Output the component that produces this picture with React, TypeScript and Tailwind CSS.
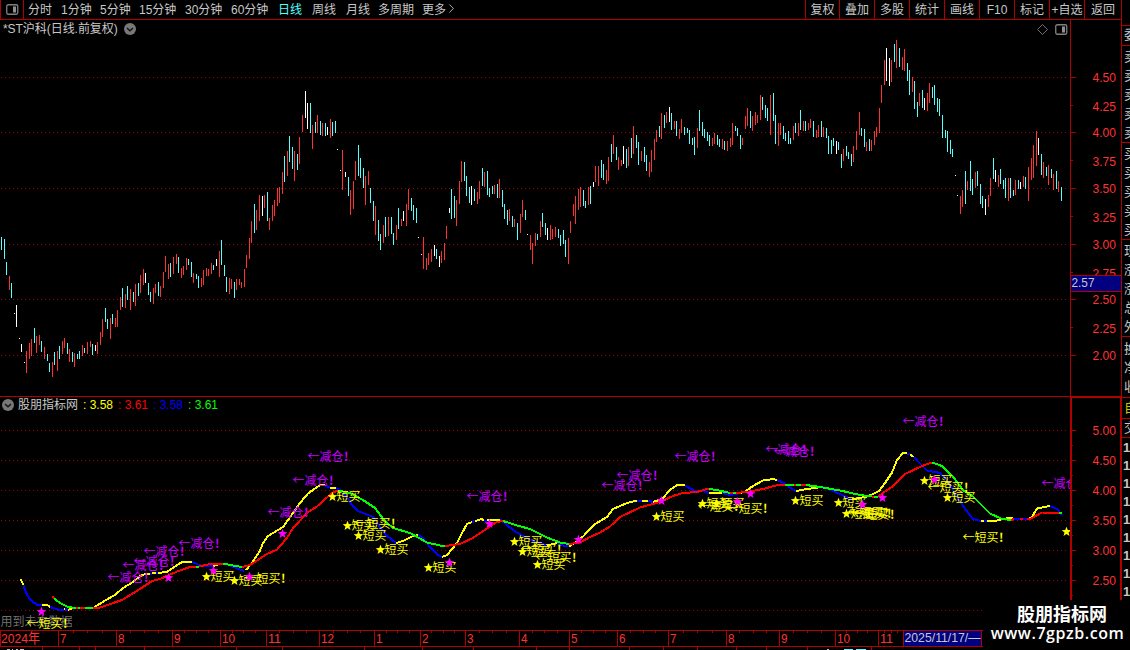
import { ChevronRight } from 'lucide-react'

const RED = '#ff3232'
const LINE = '#b00000'
const CYAN = '#54ffff'

const PERIODS = [
  { label: '分时', width: 'w-[33px]' },
  { label: '1分钟', width: 'w-[39px]' },
  { label: '5分钟', width: 'w-[39px]' },
  { label: '15分钟', width: 'w-[46px]' },
  { label: '30分钟', width: 'w-[46px]' },
  { label: '60分钟', width: 'w-[47px]' },
  { label: '日线', width: 'w-[34px]', active: true },
  { label: '周线', width: 'w-[34px]' },
  { label: '月线', width: 'w-[32px]' },
  { label: '多周期', width: 'w-[44px]' },
]

const TOOLS = ['复权', '叠加', '多股', '统计', '画线', 'F10', '标记', '+自选']

// color + x, high, low
const BARS = `
c1,237,250 c4,239,259 c6,262,275 r9,276,290 c11,283,298 w14,313,314 w16,305,327 w19,338,339 w21,344,352 w24,362,363
r26,351,373 r29,343,359 r31,339,356 c34,328,343 r36,336,353 r39,335,345 c41,341,352 r44,347,359 c47,354,361 c49,363,372
r52,362,377 c54,352,365 r57,351,371 c59,346,359 r62,341,354 r64,338,348 c67,343,354 r69,349,362 c72,352,362 r74,353,367
c77,354,359 c79,351,359 r82,345,356 c84,348,353 r87,342,354 r90,341,347 c92,344,355 w95,345,351 r97,342,354 r100,332,345
r102,319,337 c105,308,322 c107,319,329 r110,318,339 c112,314,324 r115,318,327 r117,310,327 r120,297,310 c122,288,307 r125,294,308
c127,286,300 r130,289,310 c133,292,302 r135,284,306 c138,283,296 r140,275,293 r143,269,285 w145,273,283 c148,283,295 c150,292,302
r153,288,304 r155,284,293 c158,282,296 r160,286,297 r163,272,288 r165,256,272 r168,264,279 c170,263,277 r173,257,274 r176,254,264
c178,257,273 r181,268,278 r183,266,275 r186,258,270 c188,259,265 c191,262,277 r193,273,283 c196,274,279 c198,276,288 r201,278,287
r203,270,285 r206,268,276 r208,269,276 r211,263,274 c213,265,270 w216,259,266 r219,251,277 c221,240,265 c224,265,276 c226,277,292
r229,278,294 r231,279,289 c234,282,298 r236,279,290 r239,279,285 r241,282,288 r244,269,287 r246,255,268 r249,238,259 r251,221,243
c254,204,233 r256,210,230 r259,195,221 w262,196,216 r264,195,208 c267,192,221 r269,218,230 r272,205,221 r274,200,216 r277,188,206
r279,187,203 r282,172,194 c284,156,182 r287,151,176 c289,136,162 c292,147,169 r294,151,181 c297,154,170 r299,137,164 r302,115,132
w305,91,118 w307,103,129 c310,103,133 r312,125,149 c315,122,133 r317,115,133 c320,121,135 r322,123,136 c325,123,136 w327,127,135
r330,119,138 c332,122,136 c335,121,133 w337,149,150 w340,170,171 r342,150,190 w345,172,177 c348,177,196 r350,190,215 r353,181,209
r355,161,180 c358,145,176 c360,158,178 c363,168,188 r365,176,205 r368,171,185 c370,188,203 c373,201,221 r375,206,235 c378,220,241
c380,234,250 r383,225,243 c385,217,237 r388,217,236 c391,217,234 c393,233,245 r396,225,240 c398,208,229 r401,219,226 w403,211,221
r406,204,226 r408,189,210 c411,198,211 c413,205,220 c416,208,223 w418,237,238 w421,254,255 r423,237,269 r426,258,270 r428,253,265
r431,249,262 w434,245,256 c436,249,259 w439,256,267 r441,251,263 r444,243,260 r446,226,239 w449,208,213 c451,189,219 c454,196,218
r456,200,226 r459,181,204 r461,161,182 c464,162,181 c466,176,196 c469,187,203 w471,186,205 c474,189,201 r477,192,204 r479,181,199
c482,168,186 r484,172,187 c487,171,195 c489,188,197 c492,186,194 r494,185,194 c497,184,198 r499,179,198 c502,190,207 c504,204,219
c507,210,225 r509,209,221 c512,216,227 r514,219,227 c517,223,240 r520,214,233 r522,200,217 c525,210,220 w527,234,235 r530,235,250
r532,243,264 r535,233,246 c537,234,240 r540,221,237 c542,213,227 c545,223,235 w547,228,240 r550,225,240 r552,229,239 r555,227,237
c558,229,238 c560,235,246 c563,230,244 c565,240,257 r568,238,264 r570,221,233 r573,204,216 r575,196,224 r578,189,210 r580,187,207
c583,190,206 c585,201,208 r588,187,205 c590,186,204 w593,182,187 r595,166,182 r598,166,186 c601,160,178 c603,164,180 r606,170,184
r608,157,181 c611,144,162 r613,135,154 c616,147,160 r618,157,170 r621,160,166 w623,146,164 c626,149,168 r628,147,166 c631,138,158
r633,126,154 c636,135,148 c638,142,165 r641,151,161 c644,147,162 c646,155,171 r649,162,177 r651,150,172 r654,139,160 r656,130,142
c659,126,137 r661,113,139 c664,115,128 r666,112,123 w669,107,122 c671,113,130 r674,121,129 c676,121,136 r679,129,139 r681,119,133
c684,127,135 c687,128,133 c689,130,144 c692,138,145 c694,137,155 r697,128,148 c699,110,131 c702,122,136 c704,129,138 c707,132,141
c709,135,146 r712,138,146 r714,133,144 c717,135,145 c719,139,147 r722,139,149 c724,141,150 r727,141,151 r730,138,147 r732,123,145
c735,126,131 c737,128,136 c740,135,149 r742,138,145 r745,116,129 r747,108,126 c750,111,128 r752,116,131 r755,112,125 r757,115,123
r760,95,120 c762,97,110 c765,105,118 c767,108,121 r770,95,135 c773,93,121 c775,115,144 r778,123,146 r780,123,135 c783,126,139
c785,133,141 c788,131,144 c790,138,144 r793,126,140 c795,123,133 r798,123,136 c800,110,130 r803,121,131 c805,121,131 r808,123,130
r810,119,128 c813,121,137 r816,130,138 r818,125,137 c821,121,137 r823,127,137 c826,128,138 c828,136,154 c831,140,154 c833,138,146
w836,141,154 c838,142,150 c841,154,168 r843,149,161 c846,146,156 c848,152,159 c851,154,166 r853,146,162 r856,131,150 r859,112,135
c861,128,136 c864,129,147 r866,142,151 c869,139,151 r871,140,151 r874,131,145 r876,127,137 r879,108,133 r881,85,103 r884,60,85
w886,48,81 w889,58,86 r891,60,82 c894,44,62 r896,40,68 c899,48,67 r902,57,70 r904,49,71 c907,63,81 c909,70,95
r912,77,92 c914,81,109 c917,102,117 r919,93,106 c922,90,108 w924,98,110 r927,93,111 r929,83,103 c932,87,98 c934,85,105
c937,98,112 c939,99,116 c942,115,138 c945,130,138 c947,131,152 c950,140,154 c952,149,157 w955,175,176 w957,195,196 r960,196,214
r962,190,207 c965,171,204 r967,181,190 c970,161,191 c972,179,195 r975,172,188 c977,171,186 c980,184,204 c982,196,208 w985,199,215
r988,195,207 r990,178,196 c993,158,179 w995,170,182 r998,175,187 c1000,169,184 c1003,180,189 c1005,178,198 r1008,178,201 c1010,178,198
c1013,190,196 r1015,180,195 c1018,180,189 w1020,182,189 r1023,176,187 c1025,177,189 r1028,167,201 r1031,158,180 r1033,145,178 r1036,131,166
w1038,138,155 c1041,154,175 r1043,162,178 c1046,167,176 r1048,165,185 c1051,169,178 r1053,174,190 c1056,171,189 r1058,181,192 c1061,187,201`
  .trim()
  .split(/\s+/)
  .map((s) => {
    const [x, high, low] = s.slice(1).split(',').map(Number)
    return { kind: s[0], x, high, low }
  })

const BAR_COLORS: Record<string, string> = { c: CYAN, r: RED, w: '#ffffff' }

// y = rising, b = falling
const FAST = [
  'y 20.5,579 23.5,585',
  'b 23.5,585 25,590 28,596.5 32.5,601.5 36.5,604.5 42,605',
  'y 42,605 48,605.5 50,607',
  'b 50,607 58,609.5 64,610',
  'y 64,610 65,609',
  'b 65,609 68,610',
  'y 68,610 73,608 93,608 98,605 105,600.5 115,595 123,588 133,582 140,576 147,573.5 150,573.5',
  'b 150,573.5 152,573.5',
  'y 152,573.5 156,573',
  'b 156,573 158,573',
  'y 158,573 167,572 177,565 183,561.5 192,562',
  'b 192,562 197,564 202,566 213,566',
  'y 213,566 220,564 226,564',
  'b 226,564 236,568 244,571',
  'y 246,570 253,561.5 260,550.5 263,543 268,536 273,533 283,527 293,513 300,503 308,493.5 320,485 325,485.5',
  'b 325,485.5 330,487.5',
  'y 330,487.5 336,488',
  'b 336,488 341.5,491 347,497 352,505 358,511 373,517 380,527 387,536 396,543',
  'y 396,543 403,541 412,536.5 418,535',
  'b 418,535 423,538 430,547 438,555 442,557',
  'y 442,557 447,555 457,543 461,535 467,524 472,522',
  'b 472,522 475,521',
  'y 475,521 482,519 484,520.5',
  'b 484,520.5 487,520.5',
  'y 487,520.5 500,519.5',
  'b 500,519.5 504,522.5 513,530 523,536 533,541 547,545.5',
  'y 547,545.5 557,543',
  'b 557,543 563,545.5 569,546.5',
  'y 569,546.5 573,544 578,541 583,536.5 595,524 607,517 613,509 627,503 637,500.5',
  'b 637,500.5 642,500.5',
  'y 642,500.5 648,500.5',
  'b 648,500.5 653,502',
  'y 653,502 662,499 670,490 677,485 685,485.5',
  'b 685,485.5 695,491 703,491 709,493',
  'y 709,493 722,493',
  'b 722,493 730,495 740,493',
  'y 740,493 745,491.5 753,486 763,480.5 773,479 777,480',
  'b 777,480 783,482.5 792,489 796,491',
  'y 796,491 807,489 822,487',
  'b 822,487 827,488.5 840,494 852,499.5',
  'y 852,499.5 860,498 867,496.5 873,494 879,491 885,483 892,472.5 897,460 903,453 907,453.5',
  'b 907,453.5 910,454.5',
  'y 910,454.5 914,457',
  'b 914,457 918,461.5 927,470.5 940,473 947,480 953,490 960,501.5 967,511.5 973,519 981,521',
  'y 981,521 984,521',
  'b 984,521 987,521',
  'y 987,521 997,520.5 1010,517.5 1014,519',
  'b 1014,519 1022,519',
  'y 1022,519 1025,519',
  'b 1025,519 1028,519',
  'y 1028,519 1032,517 1037,508.5 1050,506',
  'b 1050,506 1057,509 1062,515',
]

// r = rising, g = falling
const SLOW = [
  'r 52.5,596 54,598.5',
  'g 54,598.5 60,603 68,607 76,608',
  'r 76,608 78,608',
  'g 78,608 80,608',
  'r 80,608 85,608',
  'g 85,608 93,608',
  'r 93,608 100,607.5 122,600 140,589 152,581 160,579 177,571.5 190,567 196,567',
  'g 196,567 199,566.5',
  'r 199,566.5 208,564.5 223,563.5',
  'g 223,563.5 233,565.5 242,567',
  'r 242,567 250,565 267,554 277,549.5 287,538 293,528 308,512 317,506.5 332,493 338,490.5',
  'g 338,490.5 350,493 363,500 375,508 385,521.5 393,528 410,533 427,542.5 440,545.5 445,546',
  'r 445,546 460,544 473,538 490,526.5 497,522 503,521',
  'g 503,521 517,525.5 530,529 547,537.5 560,542.5 569,544',
  'r 569,544 580,542.5 590,537 600,532.5 610,526.5 620,517 640,507.5 660,502 673,496 683,493 697,492 707,489 709,489',
  'g 709,489 717,490 730,493',
  'r 730,493 733,493',
  'g 733,493 736,493',
  'r 736,493 747,492 763,489 778,485 785,485',
  'g 785,485 794,485',
  'r 794,485 796,485',
  'g 796,485 801,485',
  'r 801,485 806,485',
  'g 806,485 820,487 840,490.5 860,495 872,496.5',
  'r 872,496.5 874,496.5',
  'g 874,496.5 878,496.5',
  'r 878,496.5 893,486 905,474 922,466 932,462.5',
  'g 932,462.5 942,466 953,476.5 963,490 973,496.5 990,513.5 1002,519 1011,520',
  'r 1011,520 1014,519',
  'b 1014,519 1020,519',
  'r 1020,519 1023,519',
  'b 1023,519 1027,519',
  'r 1027,519 1031,518.5 1042,512.5 1059,513',
  'g 1059,513 1062,513',
]

const LINE_COLORS: Record<string, string> = {
  y: '#ffff00',
  b: '#0000ff',
  r: '#ff0000',
  g: '#00ff00',
}

const BUY_STARS = [
  [206, 576], [234, 580], [332, 496], [347, 525], [358, 535], [380, 549], [428, 567], [514, 541], [522, 551],
  [537, 564], [656, 516], [702, 503], [716, 503], [795, 500], [838, 502], [846, 513], [924, 480], [947, 497], [1066, 531],
]

const CROSS_STARS = [
  [41, 611], [168, 577], [213, 570], [249, 576], [282, 533], [449, 562], [489, 523], [578, 539], [661, 500],
  [737, 501], [750, 493], [862, 504], [882, 497], [934, 479],
]

const BUY_NOTES = [
  [27, 624], [245, 579], [355, 524], [521, 550], [536, 558], [698, 507], [727, 509], [848, 513], [851, 514],
  [854, 515], [928, 488], [963, 538],
]

const SELL_NOTES = [
  [108, 578], [123, 566], [134, 562], [144, 552], [179, 544], [268, 513], [293, 481], [308, 457], [467, 497],
  [602, 486], [617, 476], [675, 457], [766, 450], [774, 452], [903, 422], [1042, 484],
]

const PRICES: [string, number][] = [
  ['4.50', 77], ['4.25', 106], ['4.00', 132], ['3.75', 161], ['3.50', 188], ['3.25', 217],
  ['3.00', 244], ['2.75', 273], ['2.50', 299], ['2.25', 328], ['2.00', 355],
]

const MONTHS: [string, number][] = [
  ['7', 58], ['8', 116], ['9', 172], ['10', 220], ['11', 266], ['12', 319], ['1', 374], ['2', 420], ['3', 465],
  ['4', 519], ['5', 569], ['6', 617], ['7', 668], ['8', 726], ['9', 779], ['10', 835], ['11', 878],
]

const QUOTE_GROUPS = [
  { rows: ['委'], cls: 'h-[20px] pb-px' },
  { rows: ['卖', '卖', '卖', '卖', '卖'], cls: 'h-[97px] pt-0.5' },
  { rows: ['买', '买', '买', '买', '买'], cls: 'h-[97px] pt-0.5' },
  { rows: ['现', '涨', '涨', '总', '外'], cls: 'h-[97px] pt-0.5' },
  { rows: ['换', '净', '收'], cls: 'h-[61px] pt-0.5' },
  { rows: ['自'], cls: 'h-[21px] text-[#c8c800]' },
  { rows: ['交'], cls: 'h-[19px]' },
]

const CJK = '"Liberation Sans", "Noto Sans CJK SC", sans-serif'

function Num({ x, y, w, children, fill = RED }: { x: number; y: number; w: number; children: string; fill?: string }) {
  return (
    <text x={x} y={y + 5} textLength={w} lengthAdjust="spacingAndGlyphs" fontSize="13.5" fontFamily={CJK} fill={fill}>
      {children}
    </text>
  )
}

function Star({ x, y, fill }: { x: number; y: number; fill: string }) {
  return (
    <path
      transform={`translate(${x + 0.5} ${y + 0.5})`}
      d="M0-4.8 1.3-1.4 4.8-1.3 2 .9 3 4.4 0 2.4-3 4.4-2 .9-4.8-1.3-1.3-1.4Z"
      fill={fill}
    />
  )
}

function Note({ x, y, fill, children }: { x: number; y: number; fill: string; children: string }) {
  const bang = children.endsWith('!')
  return (
    <text x={x - 0.5} y={y + 4} fontSize="12" fill={fill} fontFamily='"Noto Sans CJK SC", sans-serif'>
      {bang ? children.slice(0, -1) : children}
      {bang && (
        <tspan dx="0.5" fontWeight="bold">
          !
        </tspan>
      )}
    </text>
  )
}

function Grid({ rows }: { rows: number[] }) {
  return (
    <g stroke="#a80000" strokeDasharray="1 3" shapeRendering="crispEdges">
      {rows.map((y) => (
        <line key={y} x1="1" x2="1067" y1={y + 0.5} y2={y + 0.5} />
      ))}
    </g>
  )
}

function PanelIcon() {
  return (
    <svg width="13" height="11" viewBox="0 0 13 11" className="shrink-0">
      <rect x=".75" y=".75" width="11" height="9.5" rx="1.5" fill="none" stroke="#808080" strokeWidth="1.3" />
      <rect x="7" y="2.5" width="3" height="6" fill="#909090" />
    </svg>
  )
}

function Dropdown() {
  return (
    <svg width="12" height="12" viewBox="0 0 12 12" className="shrink-0">
      <circle cx="6" cy="6" r="6" fill="#787878" />
      <path d="M3 5l3 2.8L9 5" fill="none" stroke="#111" strokeWidth="1.4" />
    </svg>
  )
}

function Toolbar() {
  return (
    <header className="flex h-5 shrink-0 items-stretch border-b border-[#b00000] leading-[20px]">
      <div className="flex w-6 items-center justify-center border-x border-[#b00000] pb-px">
        <PanelIcon />
      </div>
      <nav className="flex flex-1 pl-1">
        {PERIODS.map(({ label, width, active }) => (
          <span key={label} className={`${width} shrink-0 ${active ? 'text-[#54ffff]' : ''}`}>
            {label}
          </span>
        ))}
        <span className="flex">
          更多
          <ChevronRight size={15} strokeWidth={1.4} className="-ml-0.5 mt-px" />
        </span>
      </nav>
      <div className="flex">
        {TOOLS.map((t, i) => (
          <span
            key={t}
            className={`border-l border-[#b00000] text-center whitespace-nowrap ${i === 0 ? 'w-[34px]' : 'w-[35px]'}`}
          >
            {t}
          </span>
        ))}
        <span className="w-[37px] border-l border-[#b00000] text-center">返回</span>
      </div>
    </header>
  )
}

function PriceChart() {
  return (
    <svg width="1121" height="376" viewBox="0 20 1121 376" className="block">
      <Grid rows={[77, 132, 188, 244, 299, 355]} />
      <g shapeRendering="crispEdges">
        {BARS.map((b) => (
          <rect key={b.x} x={b.x} y={b.high} width="1" height={b.low - b.high} fill={BAR_COLORS[b.kind]} />
        ))}
        <rect x="1070" y="20" width="1" height="376" fill={LINE} />
        {[77, 132, 188, 244, 299, 355].map((y) => (
          <rect key={y} x="1071" y={y} width="5" height="1" fill={LINE} />
        ))}
        {[105, 160, 216, 272, 327].map((y) => (
          <rect key={y} x="1071" y={y} width="2" height="1" fill={LINE} />
        ))}
      </g>
      {PRICES.map(([label, y]) => (
        <Num key={label} x={1092.5} y={y} w={23.5}>
          {label}
        </Num>
      ))}
      <rect x="1070.5" y="275.5" width="52" height="16" fill="#000080" stroke={LINE} shapeRendering="crispEdges" />
      <Num x={1071.5} y={282} w={23} fill="#c8c8c8">
        2.57
      </Num>
    </svg>
  )
}

function IndicatorChart() {
  const rows = [430, 460, 490, 520, 550, 580, 610]
  return (
    <svg width="1121" height="216" viewBox="0 414 1121 216" className="block">
      <Grid rows={rows} />
      <Note x={1} y={622} fill="#707070">
        用到未来数据
      </Note>
      <g fill="none" strokeWidth="2" shapeRendering="crispEdges">
        {[...FAST, ...SLOW].map((s) => (
          <polyline key={s} points={s.slice(2)} stroke={LINE_COLORS[s[0]]} />
        ))}
      </g>
      {SELL_NOTES.map(([x, y]) => (
        <Note key={`${x}-${y}`} x={x} y={y} fill="#c800ff">
          ←减仓!
        </Note>
      ))}
      {BUY_STARS.map(([x, y]) => (
        <g key={x}>
          <Star x={x} y={y} fill="#ffff00" />
          {x < 1060 && (
            <Note x={x + 5} y={y + 1} fill="#ffff00">
              短买
            </Note>
          )}
        </g>
      ))}
      {BUY_NOTES.map(([x, y]) => (
        <Note key={`${x}-${y}`} x={x} y={y} fill="#ffff00">
          ←短买!
        </Note>
      ))}
      {CROSS_STARS.map(([x, y]) => (
        <Star key={x} x={x} y={y} fill="#ff00ff" />
      ))}
      <rect x="1070" y="414" width="51" height="216" fill="#000" />
      <g fill={LINE} shapeRendering="crispEdges">
        <rect x="1070" y="414" width="2" height="216" />
        <rect x="1120" y="414" width="2" height="216" />
        {rows.map((y) => (
          <rect key={y} x="1072" y={y} width="4" height="1" />
        ))}
        {rows.map((y) => (
          <rect key={y} x="1072" y={y + 15} width="1" height="1" />
        ))}
      </g>
      {['5.00', '4.50', '4.00', '3.50', '3.00', '2.50'].map((label, i) => (
        <Num key={label} x={1092.5} y={430 + i * 30} w={23.5}>
          {label}
        </Num>
      ))}
    </svg>
  )
}

function TimeAxis() {
  return (
    <svg width="1121" height="20" viewBox="0 630 1121 20" className="block">
      <g fill={LINE} shapeRendering="crispEdges">
        <rect x="0" y="630" width="1121" height="1" />
        <rect x="0" y="646" width="1121" height="1" />
        <rect x="0" y="630" width="1" height="17" />
        {MONTHS.map(([, x], i) => {
          const next = MONTHS[i + 1]?.[1] ?? 903
          const step = (next - x) / 4
          return (
            <g key={x}>
              <rect x={x} y="631" width="1" height="15" />
              {[1, 2, 3].map((n) => (
                <rect key={n} x={Math.round(x + step * n)} y="631" width="1" height="2" />
              ))}
            </g>
          )
        })}
        {[42, 79, 95, 144, 236, 282, 364, 422, 473, 536, 569, 629, 663, 697, 736, 766, 807, 871].map((x) => (
          <rect key={x} x={x} y="647" width="1" height="3" />
        ))}
      </g>
      <Num x={1} y={638} w={39}>
        2024年
      </Num>
      {MONTHS.map(([label, x]) => (
        <Num key={x} x={x + 2} y={638} w={label.length === 2 ? 13 : 6.5}>
          {label}
        </Num>
      ))}
      <rect x="903.5" y="630.5" width="78" height="16" fill="#000080" stroke={LINE} shapeRendering="crispEdges" />
      <Num x={904.5} y={637} w={76} fill="#c8c8c8">
        2025/11/17/—
      </Num>
      <path d="M7 649.5h3m2 0h1m3 0h2m2 0h4M827 649.5h2" stroke="#c0c0c0" />
      <path d="M844 649.5h9m3 0h10" stroke={CYAN} />
    </svg>
  )
}

function QuoteStrip() {
  return (
    <aside className="flex w-[9px] shrink-0 flex-col overflow-hidden border-l border-[#b00000] text-[13px]">
      <div className="h-[26px] shrink-0 border-b border-[#b00000]" />
      {QUOTE_GROUPS.map(({ rows, cls }, i) => (
        <div key={i} className={`${cls} flex shrink-0 flex-col justify-around border-b border-[#b00000] pl-0.5`}>
          {rows.map((r, j) => (
            <span key={j} className="h-[18px] w-4 leading-[18px]">
              {r}
            </span>
          ))}
        </div>
      ))}
      {Array.from({ length: 9 }, (_, i) => (
        <span key={i} className="h-[18px] shrink-0 pl-px leading-[20px] font-bold">
          1
        </span>
      ))}
    </aside>
  )
}

export default function App() {
  return (
    <div className="relative flex h-[650px] w-[1130px] overflow-hidden bg-black font-['Liberation_Sans','Noto_Sans_CJK_SC',sans-serif] text-[12px] text-[#c8c8c8]">
      <main className="flex w-[1121px] shrink-0 flex-col">
        <Toolbar />
        <section className="relative">
          <div className="absolute inset-x-0 top-0 flex h-[18px] items-center pl-[3px]">
            <span className="w-[121px] tracking-[-0.05px] whitespace-nowrap">*ST沪科(日线.前复权)</span>
            <Dropdown />
            <svg width="11" height="11" viewBox="0 0 11 11" className="mr-[7px] ml-auto">
              <path d="M5.5.5l5 5-5 5-5-5z" fill="none" stroke="#707070" />
            </svg>
            <span className="mr-[53px]">
              <PanelIcon />
            </span>
          </div>
          <PriceChart />
        </section>
        <section className="flex h-[18px] shrink-0 border-t border-[#b00000]">
          <div className="flex w-[1070px] items-center pb-[2px] pl-0.5 leading-[16px]">
            <Dropdown />
            <span className="ml-[4px] w-[65px]">股朋指标网</span>
            <span className="w-[35px] text-[#ffff00]">: 3.58</span>
            <span className="w-[35px] text-[#ff0000]">: 3.61</span>
            <span className="w-[35px] text-[#0000ff]">: 3.58</span>
            <span className="text-[#00ff00]">: 3.61</span>
          </div>
          <div className="w-[51px] border-t border-r border-l-2 border-[#b00000]" />
        </section>
        <IndicatorChart />
        <TimeAxis />
      </main>
      <QuoteStrip />
      <div className="absolute right-0 bottom-0 flex h-[50px] w-[147px] flex-col items-center bg-black text-white">
        <span className="mt-[4px] ml-[11px] text-[18px] leading-[23px] font-bold">股朋指标网</span>
        <span className="ml-0.5 font-['Open_Sans',sans-serif] text-[16px] leading-[13px] font-semibold tracking-[0.55px]">
          www.7gpzb.com
        </span>
      </div>
    </div>
  )
}
